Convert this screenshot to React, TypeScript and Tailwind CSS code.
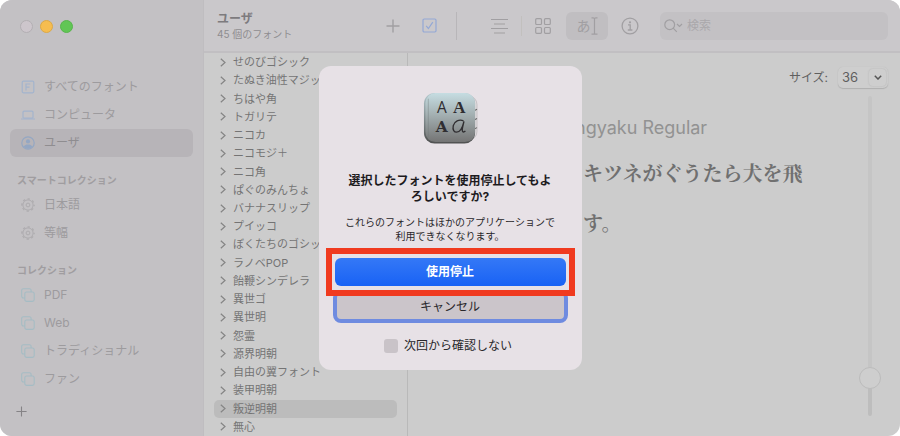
import { ReactNode, useState } from "react";

const families = [
  "せのびゴシック",
  "たぬき油性マジック",
  "ちはや角",
  "トガリテ",
  "ニコカ",
  "ニコモジ＋",
  "ニコ角",
  "ぱぐのみんちょ",
  "バナナスリップ",
  "プイッコ",
  "ぼくたちのゴシック",
  "ラノベPOP",
  "飴鞭シンデレラ",
  "異世ゴ",
  "異世明",
  "怨霊",
  "源界明朝",
  "自由の翼フォント",
  "装甲明朝",
  "叛逆明朝",
  "無心",
];

function FontBoxIcon() {
  return (
    <svg width="14" height="14" viewBox="0 0 14 14" fill="none" stroke="#a3b4cd" strokeWidth="1.2">
      <rect x="1.2" y="1.2" width="11.6" height="11.6" rx="1.2" />
      <path d="M5 10.5V4h4.2M5 7.2h3.6" />
    </svg>
  );
}

function LaptopIcon() {
  return (
    <svg width="14" height="14" viewBox="0 0 14 14" fill="none" stroke="#a3b4cd" strokeWidth="1.2">
      <rect x="2" y="3.2" width="10" height="7" rx="1" />
      <path d="M0 11h14" />
    </svg>
  );
}

function UserIcon() {
  return (
    <svg width="14" height="14" viewBox="0 0 14 14">
      <circle cx="7" cy="7" r="6.2" fill="none" stroke="#94a7c3" strokeWidth="1.2" />
      <circle cx="7" cy="5.4" r="2.1" fill="#94a7c3" />
      <path d="M2.6 10.7C3.4 9 5 8.5 7 8.5s3.6.5 4.4 2.2A6 6 0 0 1 7 12.8a6 6 0 0 1-4.4-2.1Z" fill="#94a7c3" />
    </svg>
  );
}

function GearIcon() {
  return (
    <svg width="14" height="14" viewBox="0 0 14 14" fill="none" stroke="#aeacaf">
      <circle cx="7" cy="7" r="5.1" strokeWidth="1" />
      <circle cx="7" cy="7" r="6.1" strokeWidth="1.4" strokeDasharray="2.3 2.49" strokeDashoffset="1.15" />
      <circle cx="7" cy="7" r="1.9" strokeWidth="1" />
    </svg>
  );
}

function CollectionIcon() {
  return (
    <svg width="14" height="14" viewBox="0 0 14 14" fill="none" stroke="#a5bcc4" strokeWidth="1.1">
      <rect x="3.8" y="4" width="9.4" height="9.4" rx="1.8" />
      <path d="M3.8 10H2.4A1.7 1.7 0 0 1 .7 8.3V2.4A1.7 1.7 0 0 1 2.4.7h6a1.7 1.7 0 0 1 1.7 1.7V4" />
    </svg>
  );
}

function PlusIcon({ size }: { size: number }) {
  return (
    <svg width={size} height={size} viewBox="0 0 14 14" fill="none" stroke="currentColor" strokeWidth="1.4">
      <path d="M7 .5v13M.5 7h13" />
    </svg>
  );
}

function FontBookIcon() {
  return (
    <svg width="56" height="54" viewBox="0 0 58 56" aria-hidden="true">
      <defs>
        <linearGradient id="cover" x1="0" y1="0" x2="0" y2="1">
          <stop offset="0" stopColor="#c6dde2" />
          <stop offset="0.45" stopColor="#a3afb1" />
          <stop offset="1" stopColor="#747474" />
        </linearGradient>
        <linearGradient id="spine" x1="0" y1="0" x2="0" y2="1">
          <stop offset="0" stopColor="#b4c9ce" />
          <stop offset="1" stopColor="#4f5050" />
        </linearGradient>
      </defs>
      <rect x="14" y="5" width="43" height="46" rx="9" fill="#dedadd" stroke="#bcb9bb" strokeWidth="0.8" />
      <path d="M54 20.5l3-1.5M54 30l3-1.5M54 39.5l3-1.5" stroke="#666" strokeWidth="1.1" />
      <rect x="2" y="2" width="53" height="52.5" rx="11" fill="url(#spine)" />
      <rect x="3.5" y="2" width="51.5" height="51" rx="10.5" fill="url(#cover)" />
      <path d="M6.5 8v40" stroke="#6f7879" strokeWidth="0.7" opacity="0.6" />
      <g fill="#302e31" textAnchor="middle">
        <text x="20.5" y="23" fontSize="16" className="font-['Open_Sans']">A</text>
        <text x="38.5" y="23" fontSize="18" className="font-['Liberation_Serif'] font-bold">A</text>
        <text x="20.5" y="43" fontSize="16" className="font-['DejaVu_Serif'] font-bold">A</text>
      </g>
      <path
        d="M43 31c-4.500-2-9.500.5-10.600 5-1 4.600 1 6.700 3.400 6.700 3.200 0 6.200-4.700 7.700-11.200-1 4.400-2.200 8-1.700 9.800.4 1.600 1.700 1.500 3.200.2"
        fill="none"
        stroke="#302e31"
        strokeWidth="1.4"
      />
    </svg>
  );
}

function SidebarItem({
  icon,
  label,
  active = false,
}: {
  icon: ReactNode;
  label: string;
  active?: boolean;
}) {
  return (
    <li>
      <button
        type="button"
        className={`flex h-7 w-full items-center gap-[9px] rounded-md px-[11px] text-[12px] ${
          active ? "bg-[#b7b4b8] text-[#8f8d90]" : "text-[#9d9b9e]"
        }`}
      >
        {icon}
        <span>{label}</span>
      </button>
    </li>
  );
}

function SidebarHeading({ children }: { children: ReactNode }) {
  return (
    <h2 className="mt-[13px] flex h-[21px] items-center px-[7px] text-[10px] font-bold text-[#a09da0]">
      {children}
    </h2>
  );
}

function Sidebar() {
  return (
    <aside className="flex w-[204px] shrink-0 flex-col border-r border-[#bfbdc0] bg-[#c3c1c4]">
      <div className="flex h-[53px] items-center gap-[7px] pl-5">
        <button type="button" aria-label="閉じる" className="size-[13px] rounded-full border border-[#b3afb3] bg-[#cdc6cc]" />
        <button type="button" aria-label="しまう" className="size-[13px] rounded-full border border-[#dba947] bg-[#f6bd50]" />
        <button type="button" aria-label="拡大" className="size-[13px] rounded-full border border-[#58b54d] bg-[#61c655]" />
      </div>
      <nav className="flex-1 px-2.5 pt-5">
        <ul>
          <SidebarItem icon={<FontBoxIcon />} label="すべてのフォント" />
          <SidebarItem icon={<LaptopIcon />} label="コンピュータ" />
          <SidebarItem icon={<UserIcon />} label="ユーザ" active />
        </ul>
        <SidebarHeading>スマートコレクション</SidebarHeading>
        <ul>
          <SidebarItem icon={<GearIcon />} label="日本語" />
          <SidebarItem icon={<GearIcon />} label="等幅" />
        </ul>
        <SidebarHeading>コレクション</SidebarHeading>
        <ul>
          {["PDF", "Web", "トラディショナル", "ファン"].map((name) => (
            <SidebarItem key={name} icon={<CollectionIcon />} label={name} />
          ))}
        </ul>
      </nav>
      <button type="button" aria-label="コレクションを追加" className="mb-[19px] ml-4 w-fit text-[#858386]">
        <PlusIcon size={11} />
      </button>
    </aside>
  );
}

function Toolbar() {
  return (
    <header className="flex h-[53px] shrink-0 items-center border-b-2 border-[#c1bfc2] bg-[#cac8cb] pr-3 text-[#a19fa2]">
      <div className="w-[182px] shrink-0 pl-[13px]">
        <h1 className="text-[12px] leading-4 font-bold text-[#7d7b7e]">ユーザ</h1>
        <p className="text-[10px] leading-3.5 text-[#8f8d90]">45 個のフォント</p>
      </div>
      <button type="button" aria-label="追加">
        <PlusIcon size={14} />
      </button>
      <button type="button" aria-label="使用停止" className="ml-[22px] text-[#93a8d6]">
        <svg width="15" height="15" viewBox="0 0 15 15" fill="none" stroke="currentColor" strokeWidth="1.2">
          <rect x="1" y="1" width="13" height="13" rx="1.2" />
          <path d="M4.200 7.800l2.200 2.800 4.400-6.400" />
        </svg>
      </button>
      <div className="ml-[19px] h-7 w-px bg-[#b8b6b9]" />
      <button type="button" aria-label="サンプル" className="ml-[34px]">
        <svg width="17" height="16" viewBox="0 0 17 16" stroke="currentColor" strokeWidth="1.2">
          <path d="M0 1.500h17M3 6h11M0 10.500h17M3 15h11" />
        </svg>
      </button>
      <div className="ml-[13px] h-5 w-px bg-[#c2c0be]" />
      <button type="button" aria-label="グリッド" className="ml-[13px]">
        <svg width="16" height="16" viewBox="0 0 16 16" fill="none" stroke="currentColor" strokeWidth="1.2">
          <rect x="0.700" y="0.700" width="5.800" height="5.800" rx="1" />
          <rect x="9.500" y="0.700" width="5.800" height="5.800" rx="1" />
          <rect x="0.700" y="9.500" width="5.800" height="5.800" rx="1" />
          <rect x="9.500" y="9.500" width="5.800" height="5.800" rx="1" />
        </svg>
      </button>
      <button
        type="button"
        aria-pressed="true"
        className="ml-[15px] flex h-7 w-[42px] shrink-0 items-center justify-center rounded-md bg-[#c0bec1] text-[14px]"
      >
        <span>あ</span>
        <svg width="7" height="18" viewBox="0 0 7 18" fill="none" stroke="currentColor" strokeWidth="1.200">
          <path d="M.5.8h1.600q1.400 0 1.400 1v14.400q0 1-1.400 1H.5M6.500.8H4.900q-1.400 0-1.400 1M6.500 17.200H4.900q-1.400 0-1.400-1" />
        </svg>
      </button>
      <button type="button" aria-label="情報" className="ml-[13px]">
        <svg width="18" height="18" viewBox="0 0 18 18" fill="none" stroke="currentColor" strokeWidth="1.300">
          <circle cx="9" cy="9" r="7.900" />
          <circle cx="9" cy="5.300" r="1.100" fill="currentColor" stroke="none" />
          <path d="M7 7.900h2.200V13M6.800 13h4.600" />
        </svg>
      </button>
      <label className="ml-[21px] flex h-7 min-w-0 flex-1 items-center rounded-md bg-[#c3c1c4] pl-1">
        <svg width="19" height="14" viewBox="0 0 19 14" fill="none" stroke="currentColor" strokeWidth="1.200">
          <circle cx="5.700" cy="5.700" r="4.900" />
          <path d="M9.200 9.200l3.600 3.600M13 5l2.500 2.500L18 5" />
        </svg>
        <input
          type="search"
          aria-label="検索"
          placeholder="検索"
          className="ml-1 min-w-0 flex-1 bg-transparent text-[12px] outline-none placeholder:text-[#aaa8ab]"
        />
      </label>
    </header>
  );
}

function FamilyList() {
  const [selected, setSelected] = useState("叛逆明朝");

  return (
    <ul className="grid w-[204px] shrink-0 auto-rows-fr border-r border-[#b9b9b9] px-2.5">
      {families.map((name) => (
        <li key={name} className="flex">
          <button
            type="button"
            onClick={() => setSelected(name)}
            className={`flex w-full items-center gap-[7px] rounded-[5px] pl-[6px] text-[11px] leading-4 whitespace-nowrap text-[#747474] ${
              name === selected ? "bg-[#bcbcbc]" : ""
            }`}
          >
            <svg width="6" height="9" viewBox="0 0 6 9" fill="none" stroke="#858585" strokeWidth="1.200">
              <path d="M.8.8L5 4.500.8 8.200" />
            </svg>
            {name}
          </button>
        </li>
      ))}
    </ul>
  );
}

function Preview() {
  return (
    <section className="flex min-w-0 flex-1 flex-col pt-3.5 pr-3">
      <div className="flex items-center justify-end gap-2.5 text-[12px] text-[#5f5f5f]">
        <label htmlFor="size">サイズ:</label>
        <div className="relative">
          <select
            id="size"
            defaultValue="36"
            className="h-[21px] w-[50px] appearance-none rounded-[5px] bg-[#cecece] pl-1 text-[13px] shadow-[0_1px_1px_#b0b0b0,0_0_1px_#bbbbbb]"
          >
            <option>24</option>
            <option>36</option>
            <option>48</option>
          </select>
          <span className="pointer-events-none absolute top-0.5 right-0.5 grid size-[17px] place-items-center rounded-[4px] shadow-[0_0_2px_#b2b2b2]">
            <svg width="8" height="5" viewBox="0 0 8 5" fill="none" stroke="#555" strokeWidth="1.500">
              <path d="M.8.8L4 4 7.200.8" />
            </svg>
          </span>
        </div>
      </div>
      <div className="flex min-h-0 flex-1 pt-2">
        <div className="flex min-w-0 flex-1 flex-col items-end pt-5 pr-14">
          <div className="w-[220px]">
            <h2 className="-ml-2 text-[18px] leading-6 text-[#929292]">ngyaku Regular</h2>
            <p className="mt-2 font-['Noto_Serif_CJK_JP','Noto_Sans_CJK_JP',serif] text-[20px] leading-[50px] font-bold text-[#707070]">
              キツネがぐうたら犬を飛
              <br />
              す。
            </p>
          </div>
        </div>
        <input
          type="range"
          aria-label="プレビューのサイズ"
          min="0"
          max="100"
          defaultValue="9"
          className="mr-[7px] mb-5 w-[22px] appearance-none bg-transparent [direction:rtl] [writing-mode:vertical-lr] [&::-webkit-slider-runnable-track]:w-1 [&::-webkit-slider-runnable-track]:rounded-full [&::-webkit-slider-runnable-track]:bg-linear-to-t [&::-webkit-slider-runnable-track]:from-[#bdbdbd] [&::-webkit-slider-runnable-track]:from-12% [&::-webkit-slider-runnable-track]:to-[#c5c5c5] [&::-webkit-slider-runnable-track]:to-12% [&::-webkit-slider-thumb]:-ml-[9px] [&::-webkit-slider-thumb]:size-[22px] [&::-webkit-slider-thumb]:appearance-none [&::-webkit-slider-thumb]:rounded-full [&::-webkit-slider-thumb]:border [&::-webkit-slider-thumb]:border-[#bcbcbc] [&::-webkit-slider-thumb]:bg-[#cecece]"
        />
      </div>
    </section>
  );
}

function ConfirmDialog() {
  return (
    <div
      role="alertdialog"
      aria-labelledby="confirm-title"
      aria-describedby="confirm-body"
      className="flex w-[263px] flex-col items-center rounded-xl bg-[#e7e1e6] pt-[25px] pb-4 text-[#29272a]"
    >
      <FontBookIcon />
      <h2 id="confirm-title" className="mt-7 w-[208px] text-center text-[12px] leading-4 font-bold text-[#1d1b1e]">
        選択したフォントを使用停止してもよろしいですか?
      </h2>
      <p id="confirm-body" className="mt-2.5 w-[216px] text-center text-[10px] leading-3.5">
        これらのフォントはほかのアプリケーションで利用できなくなります。
      </p>
      <div className="relative mt-[15px] w-full px-4">
        <button
          type="button"
          className="h-7 w-full rounded-md bg-linear-to-b from-[#3478f6] to-[#1862f5] text-[12px] font-bold text-white"
        >
          使用停止
        </button>
        <div className="pointer-events-none absolute inset-x-[7px] -inset-y-2.5 border-6 border-[#f03a1f]" />
      </div>
      <div className="mt-1 w-full px-3.5">
        <button
          type="button"
          className="h-[33px] w-full rounded-lg border-4 border-[#6f8be0] bg-[#cbc5ca] text-[12px]"
        >
          キャンセル
        </button>
      </div>
      <label className="mt-[15px] mr-1 flex items-center gap-1.5 text-[12px] leading-4">
        <input type="checkbox" className="size-3.5 appearance-none rounded-[3px] bg-[#c9c3c8] checked:bg-[#3478f6]" />
        次回から確認しない
      </label>
    </div>
  );
}

export default function App() {
  return (
    <div className="min-h-screen bg-white font-['Inter','Noto_Sans_CJK_JP',sans-serif]">
      <main className="relative flex min-h-screen overflow-hidden rounded-xl bg-[#cccccc]">
        <Sidebar />
        <div className="flex min-w-0 flex-1 flex-col">
          <Toolbar />
          <div className="flex flex-1">
            <FamilyList />
            <Preview />
          </div>
        </div>
        <div className="absolute inset-0 flex items-center justify-center">
          <ConfirmDialog />
        </div>
      </main>
    </div>
  );
}
